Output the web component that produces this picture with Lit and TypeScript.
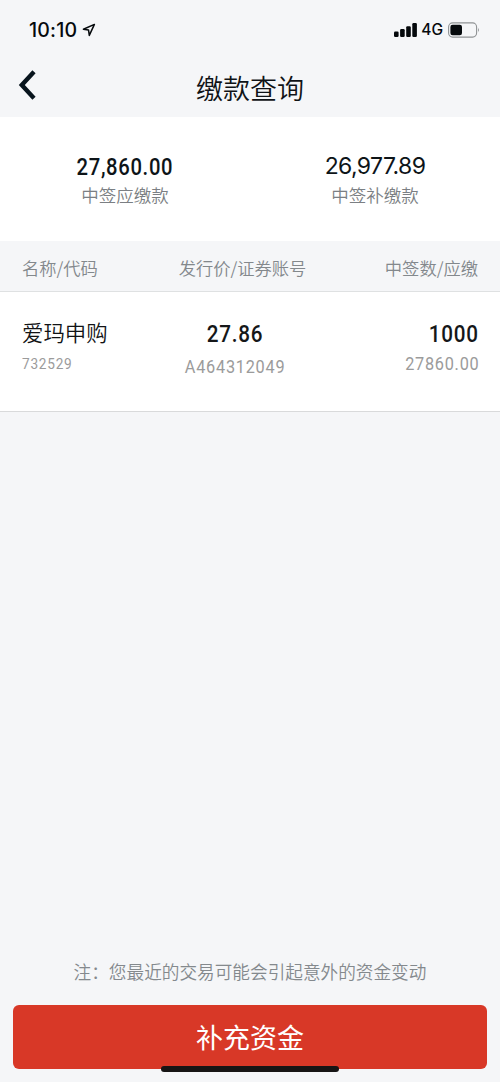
import { LitElement, html, css, svg } from "lit";
import { customElement, property } from "lit/decorators.js";

@customElement("status-bar")
class StatusBar extends LitElement {
  static styles = css`
    :host { display: flex; height: 60px; box-sizing: border-box; padding: 0 20px 0 29px; align-items: center; color: #05090c; }
    .time { font: 500 19.5px/24px Inter, sans-serif; letter-spacing: 0.2px; }
    .arrow { margin-left: 5px; }
    .spacer { flex: 1; }
    .net { font: 500 15.5px/24px Inter, sans-serif; margin: 0 5px 0 4px; letter-spacing: 0; }
    svg { display: block; }
  `;
  render() {
    return html`
      <span class="time">10:10</span>
      <svg class="arrow" width="14" height="14" viewBox="0 0 14 14">
        <path d="M12.4 1.4 1.4 6.2 6.5 6.9 7.3 12.4Z" fill="none" stroke="currentColor" stroke-width="1.5" stroke-linejoin="round" />
      </svg>
      <span class="spacer"></span>
      <svg width="23" height="14" viewBox="0 0 23 14" fill="currentColor">
        ${[5.5, 8, 10.8, 14].map((h, i) => svg`<rect x=${i * 6.1} y=${14 - h} width="4.6" height=${h} rx="1.2" />`)}
      </svg>
      <span class="net">4G</span>
      <svg width="32" height="16" viewBox="0 0 32 16">
        <rect x="0.6" y="0.9" width="28" height="14.2" rx="4" fill="none" stroke="#8f9294" stroke-width="1.1" />
        <rect x="2.4" y="2.8" width="11.6" height="10.4" rx="2.2" fill="currentColor" />
        <path d="M30.2 5.8Q31.8 8 30.2 10.2Z" fill="#777a7c" />
      </svg>
    `;
  }
}

@customElement("summary-item")
class SummaryItem extends LitElement {
  @property() amount = "";
  @property() label = "";
  @property({ type: Boolean, reflect: true }) plain = false;
  static styles = css`
    :host { display: flex; flex-direction: column; align-items: center; padding-top: 35px; }
    .amount { font: 500 23px/28px Roboto, sans-serif; letter-spacing: 0.75px; padding-top: 2px; transform: scaleX(0.88); color: #0d1418; }
    :host([plain]) .amount { font: 400 23px/28px Inter, sans-serif; letter-spacing: -0.6px; padding: 0 0 2px; transform: none; }
    .label { font: 350 17.5px/26px "Noto Sans CJK SC", sans-serif; color: #7b7f83; }
  `;
  render() {
    return html`<span class="amount">${this.amount}</span><span class="label">${this.label}</span>`;
  }
}

@customElement("app-root")
class AppRoot extends LitElement {
  static styles = css`
    :host { display: flex; flex-direction: column; height: 1082px; background: #f5f6f8; font-family: "Noto Sans CJK SC", sans-serif; overflow: hidden; }
    .nav { display: grid; grid-template-columns: 60px 1fr 60px; height: 57px; align-items: center; }
    .back { display: block; margin: -8px 0 0 18px; }
    .title { margin: -2px 0 0; text-align: center; font-size: 27px; line-height: 40px; font-weight: 350; color: #101316; }
    .summary { display: grid; grid-template-columns: 1fr 1fr; height: 124px; background: #fff; }
    .cols { display: grid; padding: 0 22px; box-sizing: border-box; }
    .head { grid-template-columns: 113px 1fr 128px; height: 51px; align-items: center; padding-top: 3px; border-bottom: 1px solid #dfe1e2; font-size: 17.3px; font-weight: 350; line-height: 26px; color: #83888c; }
    .row { grid-template-columns: 99px 1fr 128px; height: 120px; padding-top: 25px; background: #fff; border-bottom: 1px solid #d9dadb; }
    .cell { display: flex; flex-direction: column; align-items: flex-start; white-space: nowrap; }
    .cell.mid, .mid { align-items: center; text-align: center; }
    .cell.end, .end { align-items: flex-end; text-align: right; }
    .name { font-size: 21.4px; line-height: 30px; padding-bottom: 2px; font-weight: 350; color: #111315; }
    .num, .sub { transform: scaleX(0.88); transform-origin: center; letter-spacing: 0.85px; font-family: Roboto, sans-serif; }
    .num { font-size: 23.5px; line-height: 32px; font-weight: 500; padding-top: 1px; margin-bottom: -1px; color: #151719; }
    .sub { font-size: 18.5px; line-height: 30px; font-weight: 450; color: #9b9b9b; }
    .code { font-size: 15.5px; transform-origin: left; }
    .end .num, .end .sub { transform-origin: right; margin-right: -1px; }
    .account { line-height: 37px; }
    .note { margin: auto 0 0; text-align: center; font-size: 17.65px; line-height: 26px; font-weight: 350; color: #84898d; }
    .submit { margin: 20px 13px 13px; height: 64px; border: 0; border-radius: 6px; background: #d83827; color: #fff; font: 400 27px/64px "Noto Sans CJK SC", sans-serif; padding: 0; flex: none; }
    .home { position: absolute; left: 161px; top: 1066px; width: 178px; height: 6px; border-radius: 3px; background: #171515; }
  `;
  render() {
    return html`
      <status-bar></status-bar>
      <div class="nav">
        <svg class="back" width="18" height="32" viewBox="0 0 18 32">
          <path d="M16 2.8 3.8 16 16 29.2" fill="none" stroke="#08141d" stroke-width="4.4" />
        </svg>
        <h1 class="title">缴款查询</h1>
      </div>
      <div class="summary">
        <summary-item amount="27,860.00" label="中签应缴款"></summary-item>
        <summary-item plain amount="26,977.89" label="中签补缴款"></summary-item>
      </div>
      <div class="cols head">
        <span>名称/代码</span><span class="mid">发行价/证券账号</span><span class="end">中签数/应缴</span>
      </div>
      <div class="cols row">
        <div class="cell"><span class="name">爱玛申购</span><span class="sub code">732529</span></div>
        <div class="cell mid"><span class="num">27.86</span><span class="sub account">A464312049</span></div>
        <div class="cell end"><span class="num">1000</span><span class="sub">27860.00</span></div>
      </div>
      <p class="note">注：您最近的交易可能会引起意外的资金变动</p>
      <button class="submit">补充资金</button>
      <div class="home"></div>
    `;
  }
}
